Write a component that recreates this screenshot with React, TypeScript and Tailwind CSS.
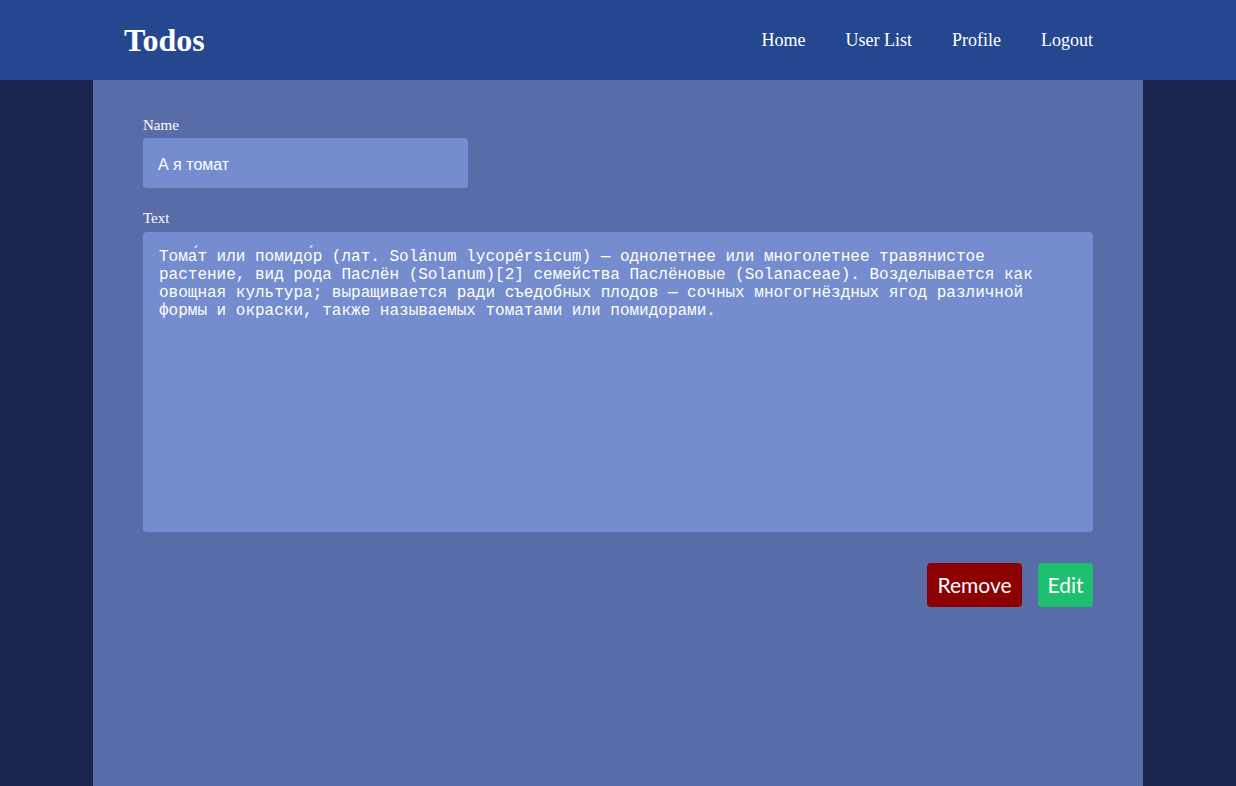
const text =
  "Тома́т или помидо́р (лат. Solánum lycopérsicum) — однолетнее или многолетнее травянистое растение, вид рода Паслён (Solanum)[2] семейства Паслёновые (Solanaceae). Возделывается как овощная культура; выращивается ради съедобных плодов — сочных многогнёздных ягод различной формы и окраски, также называемых томатами или помидорами.";

export default function App() {
  return (
    <div className="min-h-screen bg-[#1b2550] font-['Liberation_Serif',serif] text-white">
      {/* Header */}
      <header className="h-20 bg-[#25478f]">
        <div className="mx-auto flex h-full w-[1050px] items-center justify-between pl-[31px] pr-[50px]">
          <h1 className="text-[32px] font-bold">Todos</h1>
          <nav className="flex items-center gap-10 text-[18px]">
            <a>Home</a>
            <a>User List</a>
            <a>Profile</a>
            <a>Logout</a>
          </nav>
        </div>
      </header>

      {/* Main */}
      <main className="mx-auto min-h-[706px] w-[1050px] bg-[#586ca8] px-[50px] pt-[34px]">
        <label className="block text-[15px] leading-[22px]">Name</label>
        <div className="mt-[2px] flex h-[50px] w-[325px] items-center rounded bg-[#758cce] px-[15px] pt-[4px] font-['Liberation_Sans',sans-serif] text-[16px]">
          А я томат
        </div>

        <label className="mt-[19px] block text-[15px] leading-[22px]">Text</label>
        <div className="mt-[3px] h-[300px] rounded bg-[#758cce] px-[16px] pt-[16px] font-['Liberation_Mono',monospace] text-[16px] leading-[18px] whitespace-pre-wrap">
          {text}
        </div>

        <div className="mt-[31px] flex justify-end gap-4 font-['Lato',sans-serif] text-[21px]">
          <button className="h-[44px] w-[95px] rounded bg-[#8b0000] text-white">Remove</button>
          <button className="h-[44px] w-[55px] rounded bg-[#1fbf72] text-white">Edit</button>
        </div>
      </main>
    </div>
  );
}
